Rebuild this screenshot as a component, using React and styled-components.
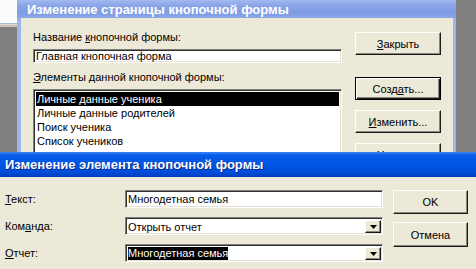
import React from 'react'
import styled, { createGlobalStyle } from 'styled-components'

const GlobalStyle = createGlobalStyle`
  html, body { margin: 0; padding: 0; background: #7f7f7f; }
  body { font-family: "Liberation Sans", Arial, sans-serif; font-size: 11px; color: #000; }
`

const activeTitle = 'linear-gradient(to bottom, #3d86f5 0, #0a5de8 12%, #0055e5 50%, #004bd6 85%, #003cbc 100%)'
const inactiveTitle = 'linear-gradient(to bottom, #a3baf0 0, #8aa5e8 30%, #7f9be4 70%, #8ca7e8 100%)'

const Desktop = styled.div`
  position: relative;
  width: 476px;
  height: 269px;
  overflow: hidden;
  background: #7f7f7f;
`

// corner of another window peeking out behind the dialogs
const Behind = styled.div`
  position: absolute;
  left: 0;
  top: 0;
  width: 17px;
  height: 23px;
  background: #fcfcfc;
  border-bottom: 1px solid #a9b7d6;
  box-shadow: 0 1px 0 #dedbcc, 0 3px 0 #c8c5b8;
`

const Window = styled.div`
  position: absolute;
  left: ${p => p.$x}px;
  top: ${p => p.$y}px;
  width: ${p => p.$w}px;
  display: flex;
  flex-direction: column;
`

const TitleBar = styled.div`
  height: ${p => p.$h}px;
  display: flex;
  align-items: center;
  padding-left: ${p => p.$pad}px;
  background: ${p => (p.$active ? activeTitle : inactiveTitle)};
  color: #fff;
  font: bold 13px "Liberation Sans", Arial, sans-serif;
  white-space: nowrap;
  text-shadow: ${p => (p.$active ? '1px 1px 0 #0b2a8c' : 'none')};
`

const Frame = styled.div`
  border-style: solid;
  border-color: ${p => (p.$active ? '#0847d4' : '#9fb5ea')};
  border-width: 0 3px 3px 4px;
  background: #ece9d8;
`

const BackBody = styled.div`
  display: flex;
  gap: 13px;
  height: 150px;
  padding: 13px 0 0 12px;
`

const Column = styled.div`
  display: flex;
  flex-direction: column;
  width: 309px;
`

const Label = styled.div`
  line-height: 13px;
  height: 13px;
  white-space: nowrap;
  margin-bottom: 5px;
`

const Sunken = styled.div`
  box-sizing: border-box;
  background: #fff;
  border: 1px solid;
  border-color: #7f7f7f #fff #fff #7f7f7f;
  box-shadow: inset 1px 1px 0 #303030, inset -1px -1px 0 #e4e1d4;
`

const TextField = styled(Sunken)`
  height: ${p => p.$h || 17}px;
  padding-left: 2px;
  display: flex;
  align-items: center;
  white-space: nowrap;
  margin-bottom: ${p => p.$mb || 0}px;
`

const ListBox = styled(Sunken)`
  height: 120px;
  padding: 2px;
`

const Row = styled.div`
  height: 14px;
  line-height: 14px;
  padding-left: 1px;
  background: ${p => (p.$selected ? '#000' : 'transparent')};
  color: ${p => (p.$selected ? '#fff' : '#000')};
`

const ButtonColumn = styled.div`
  display: flex;
  flex-direction: column;
  gap: ${p => p.$gap}px;
  padding-top: ${p => p.$top}px;
  margin-left: ${p => p.$left || 0}px;
`

const Button = styled.div`
  box-sizing: border-box;
  width: ${p => p.$w}px;
  height: ${p => p.$h}px;
  display: flex;
  align-items: center;
  justify-content: center;
  background: #ece9d8;
  border: 1px solid;
  border-color: ${p => (p.$default ? '#000' : '#fff #1a1a1a #1a1a1a #fff')};
  box-shadow: ${p =>
    p.$default
      ? 'inset 1px 1px 0 #fff, inset -1px -1px 0 #1a1a1a, inset -2px -2px 0 #8a8779'
      : 'inset -1px -1px 0 #8a8779'};
  margin-bottom: ${p => p.$mb || 0}px;
`

const FrontBody = styled.div`
  display: flex;
  height: 100px;
  padding: 13px 0 0 5px;
`

const Fields = styled.div`
  display: grid;
  grid-template-columns: 120px 258px;
  grid-auto-rows: 18px;
  row-gap: 9px;
  align-items: center;
`

const Combo = styled(Sunken)`
  height: 18px;
  display: flex;
  align-items: stretch;
  padding: 2px 1px 1px 2px;
`

const ComboText = styled.div`
  flex: 1;
  display: flex;
  align-items: center;
  white-space: nowrap;
`

const Highlight = styled.span`
  background: ${p => (p.$on ? '#000' : 'transparent')};
  color: ${p => (p.$on ? '#fff' : '#000')};
  line-height: 13px;
`

const DropButton = styled.div`
  box-sizing: border-box;
  width: 16px;
  display: flex;
  align-items: center;
  justify-content: center;
  background: #ece9d8;
  border: 1px solid;
  border-color: #fff #1a1a1a #1a1a1a #fff;
  box-shadow: inset -1px -1px 0 #8a8779;
`

const Arrow = () => (
  <svg width="7" height="4" viewBox="0 0 7 4">
    <polygon points="0,0 7,0 3.5,4" fill="#000" />
  </svg>
)

export default function App() {
  const items = ['Личные данные ученика', 'Личные данные родителей', 'Поиск ученика', 'Список учеников']
  return (
    <Desktop>
      <GlobalStyle />
      <Behind />
      <Window $x={17} $y={0} $w={439}>
        <TitleBar $h={18} $pad={10}>Изменение страницы кнопочной формы</TitleBar>
        <Frame>
          <BackBody>
            <Column>
              <Label>Название <u>к</u>нопочной формы:</Label>
              <TextField $mb={8}>Главная кнопочная форма</TextField>
              <Label><u>Э</u>лементы данной кнопочной формы:</Label>
              <ListBox>
                {items.map((t, i) => (
                  <Row key={t} $selected={i === 0}>{t}</Row>
                ))}
              </ListBox>
            </Column>
            <ButtonColumn $gap={10} $top={1}>
              <Button $w={86} $h={23} $mb={12}><span><u>З</u>акрыть</span></Button>
              <Button $w={86} $h={23} $default><span>Созд<u>а</u>ть...</span></Button>
              <Button $w={86} $h={23}><span><u>И</u>зменить...</span></Button>
              <Button $w={86} $h={23}><span><u>У</u>далить</span></Button>
            </ButtonColumn>
          </BackBody>
        </Frame>
      </Window>
      <Window $x={-4} $y={152} $w={490}>
        <TitleBar $h={25} $pad={9} $active>Изменение элемента кнопочной формы</TitleBar>
        <Frame $active>
          <FrontBody>
            <Fields>
              <div><u>Т</u>екст:</div>
              <TextField $h={18}>Многодетная семья</TextField>
              <div>Ком<u>а</u>нда:</div>
              <Combo>
                <ComboText>Открыть отчет</ComboText>
                <DropButton><Arrow /></DropButton>
              </Combo>
              <div><u>О</u>тчет:</div>
              <Combo>
                <ComboText><Highlight $on>Многодетная семья</Highlight></ComboText>
                <DropButton><Arrow /></DropButton>
              </Combo>
            </Fields>
            <ButtonColumn $gap={8} $top={0} $left={10}>
              <Button $w={75} $h={24}>OK</Button>
              <Button $w={75} $h={25}>Отмена</Button>
            </ButtonColumn>
          </FrontBody>
        </Frame>
      </Window>
    </Desktop>
  )
}
